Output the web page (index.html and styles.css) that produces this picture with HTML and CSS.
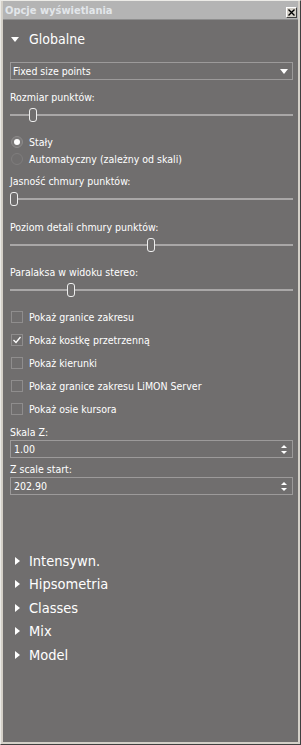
FILE: index.html
```html
<!DOCTYPE html>
<html>
<head>
<meta charset="utf-8">
<link rel="stylesheet" href="styles.css">
</head>
<body>
<div class="window">
  <div class="titlebar">
    <span class="title">Opcje wyświetlania</span>
    <span class="close">
      <svg width="9" height="9" viewBox="0 0 9 9"><path d="M1.5 1.5 L7.5 7.5 M7.5 1.5 L1.5 7.5" stroke="#000" stroke-width="1.4"/></svg>
    </span>
  </div>
  <div class="content">
    <div class="section-head open">
      <span class="tri-down"></span><span class="sec-title">Globalne</span>
    </div>
    <div class="combo">
      <span class="combo-text">Fixed size points</span>
      <span class="combo-arrow"></span>
    </div>
    <div class="label l-first">Rozmiar punktów:</div>
    <div class="slider"><div class="track"></div><div class="handle" style="left:19px"></div></div>

    <div class="radios">
      <div class="radio-row"><span class="radio checked"></span><span class="rtext">Stały</span></div>
      <div class="radio-row"><span class="radio"></span><span class="rtext">Automatyczny (zależny od skali)</span></div>
    </div>

    <div class="label l-jas">Jasność chmury punktów:</div>
    <div class="slider"><div class="track"></div><div class="handle" style="left:0px"></div></div>

    <div class="label l-poz">Poziom detali chmury punktów:</div>
    <div class="slider"><div class="track"></div><div class="handle" style="left:137px"></div></div>

    <div class="label l-par">Paralaksa w widoku stereo:</div>
    <div class="slider"><div class="track"></div><div class="handle" style="left:57px"></div></div>

    <div class="checks">
      <div class="check-row"><span class="box"></span><span class="ctext">Pokaż granice zakresu</span></div>
      <div class="check-row"><span class="box"><svg width="10" height="10" viewBox="0 0 10 10"><path d="M1.5 5 L4 7.5 L8.5 2" fill="none" stroke="#fff" stroke-width="1.3"/></svg></span><span class="ctext">Pokaż kostkę przetrzenną</span></div>
      <div class="check-row"><span class="box"></span><span class="ctext">Pokaż kierunki</span></div>
      <div class="check-row"><span class="box"></span><span class="ctext">Pokaż granice zakresu LiMON Server</span></div>
      <div class="check-row"><span class="box"></span><span class="ctext">Pokaż osie kursora</span></div>
    </div>

    <div class="label l-skala">Skala Z:</div>
    <div class="spin"><span class="spin-text">1.00</span><span class="spin-arrows"><span class="up"></span><span class="down"></span></span></div>
    <div class="label l-zs">Z scale start:</div>
    <div class="spin"><span class="spin-text">202.90</span><span class="spin-arrows"><span class="up"></span><span class="down"></span></span></div>

    <div class="sections">
      <div class="section-head closed"><span class="tri-right"></span><span class="sec-title">Intensywn.</span></div>
      <div class="section-head closed"><span class="tri-right"></span><span class="sec-title">Hipsometria</span></div>
      <div class="section-head closed"><span class="tri-right"></span><span class="sec-title">Classes</span></div>
      <div class="section-head closed"><span class="tri-right"></span><span class="sec-title">Mix</span></div>
      <div class="section-head closed"><span class="tri-right"></span><span class="sec-title">Model</span></div>
    </div>
  </div>
</div>
</body>
</html>
```
FILE: styles.css
```css
* { box-sizing: border-box; }
html, body { margin: 0; padding: 0; }
body {
  width: 301px;
  height: 745px;
  overflow: hidden;
  font-family: "DejaVu Sans Condensed", "DejaVu Sans", sans-serif;
  font-stretch: condensed;
  font-size: 10.5px;
  color: #ffffff;
  background: #3c3c3c;
}
.window {
  width: 301px;
  height: 745px;
  border-style: solid;
  border-width: 1px;
  border-color: #ecebe7 #404040 #404040 #ecebe7;
  background: #d4d0c8;
  padding: 0 2px 2px 2px;
  display: flex;
  flex-direction: column;
}
.titlebar {
  height: 19px;
  background: #b4b4b4;
  border-bottom: 1px solid #8e8e8e;
  display: flex;
  align-items: center;
  justify-content: space-between;
  padding: 0 1px 0 2px;
}
.title {
  font-weight: bold;
  color: #e2e6ea;
  font-size: 11px;
}
.close {
  width: 11px;
  height: 11px;
  margin-top: 4px;
  background: #d4d0c8;
  border: 1px solid;
  border-color: #ffffff #404040 #404040 #ffffff;
  display: flex;
  align-items: center;
  justify-content: center;
}
.close svg { display: block; }
.content {
  flex: 1;
  background: #706e6e;
  padding: 7px 5px 0 7px;
  display: flex;
  flex-direction: column;
}
.section-head {
  display: flex;
  align-items: center;
  font-size: 14px;
}
.section-head.open { height: 24px; }
.section-head.closed { height: 23.5px; }
.section-head.closed .sec-title { font-size: 14.5px; }
.sec-title { color: #ffffff; }
.tri-down {
  width: 0; height: 0;
  border-left: 4.5px solid transparent;
  border-right: 4.5px solid transparent;
  border-top: 5px solid #ffffff;
  margin: 1px 10px 0 1px;
}
.tri-right {
  width: 0; height: 0;
  border-top: 4px solid transparent;
  border-bottom: 4px solid transparent;
  border-left: 5px solid #ffffff;
  margin: 0 9px 0 5px;
}
.combo {
  margin-top: 11px;
  height: 18px;
  border: 1px solid #9c9a9a;
  display: flex;
  align-items: center;
  justify-content: space-between;
  padding: 0 4px 0 2px;
}
.combo-arrow {
  width: 0; height: 0;
  border-left: 4.5px solid transparent;
  border-right: 4.5px solid transparent;
  border-top: 5px solid #ffffff;
}
.label {
  height: 14px;
  line-height: 14px;
}
.l-first { margin-top: 10px; }
.l-jas { margin-top: 7px; }
.l-poz { margin-top: 13px; }
.l-par { margin-top: 12px; }
.l-skala { margin-top: 5px; }
.l-zs { margin-top: 4px; }
.slider {
  position: relative;
  height: 16px;
  margin-top: 3px;
}
.track {
  position: absolute;
  left: 0; right: 0;
  top: 7px;
  height: 2px;
  background: #a9a7a7;
}
.handle {
  position: absolute;
  top: 1px;
  width: 8px;
  height: 14px;
  border: 1px solid #eeeeee;
  border-radius: 3px;
  background: #706e6e;
}
.radios {
  margin-top: 10px;
  display: flex;
  flex-direction: column;
}
.radio-row {
  height: 17px;
  display: flex;
  align-items: center;
}
.radio {
  width: 12px;
  height: 12px;
  border-radius: 50%;
  border: 1px solid #7f7d7d;
  margin: 0 6px 0 1px;
  display: flex;
  align-items: center;
  justify-content: center;
}
.radio.checked {
  border-color: #8d8b8b;
  background: #7a7878;
}
.radio.checked::after {
  content: "";
  width: 6px;
  height: 6px;
  border-radius: 50%;
  background: #ffffff;
}
.checks {
  margin-top: 7px;
  display: flex;
  flex-direction: column;
}
.check-row {
  height: 23px;
  display: flex;
  align-items: center;
}
.box {
  width: 12px;
  height: 12px;
  border: 1px solid #8f8d8d;
  margin: 0 6px 0 1px;
  display: flex;
  align-items: center;
  justify-content: center;
}
.box svg { display: block; }
.spin {
  margin-top: 1px;
  height: 18px;
  border: 1px solid #9c9a9a;
  display: flex;
  align-items: center;
  justify-content: space-between;
  padding: 0 5px 0 3px;
}
.spin-arrows {
  display: flex;
  flex-direction: column;
  gap: 3px;
}
.spin-arrows .up {
  width: 0; height: 0;
  border-left: 3px solid transparent;
  border-right: 3px solid transparent;
  border-bottom: 3px solid #ffffff;
}
.spin-arrows .down {
  width: 0; height: 0;
  border-left: 3px solid transparent;
  border-right: 3px solid transparent;
  border-top: 3px solid #ffffff;
}
.sections {
  margin-top: 54px;
  display: flex;
  flex-direction: column;
}
```
